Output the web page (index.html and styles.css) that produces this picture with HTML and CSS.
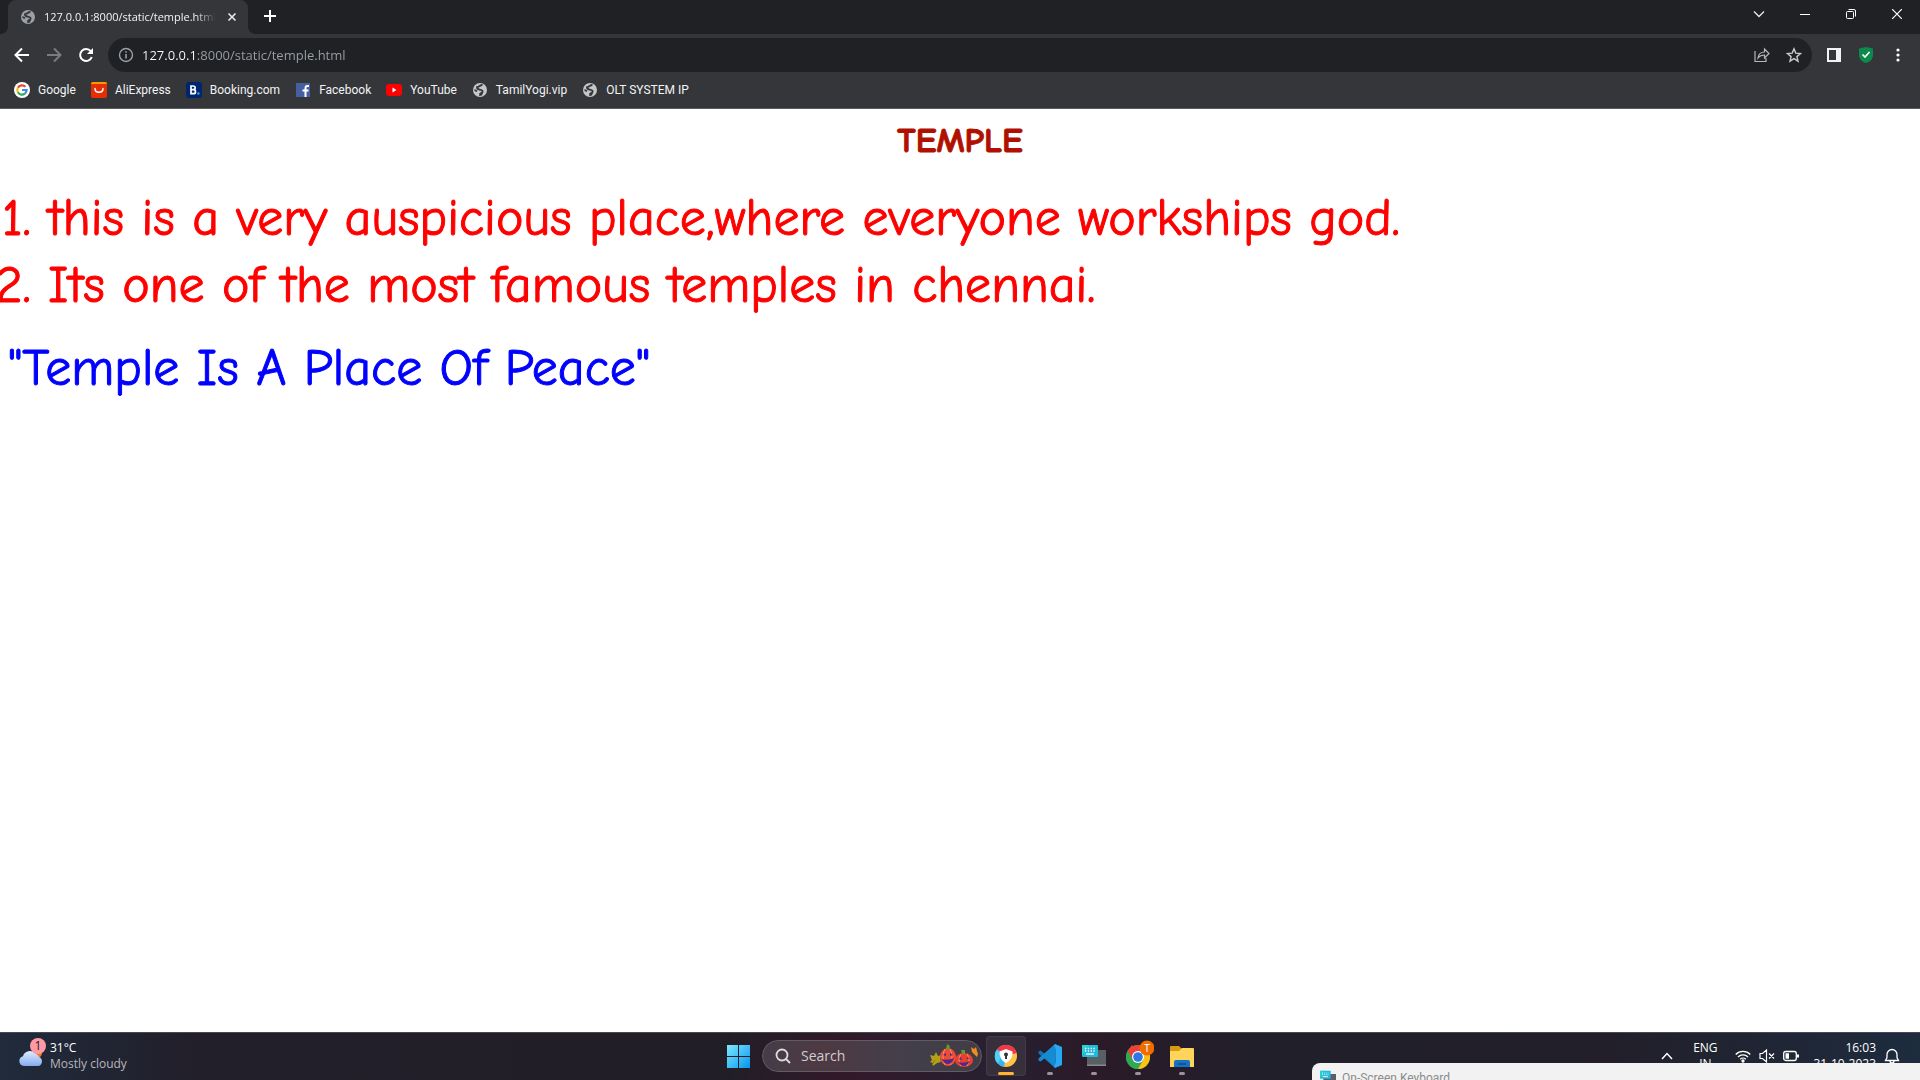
FILE: index.html
```html
<!DOCTYPE html>
<html lang="en">
<head>
<meta charset="utf-8">
<title>127.0.0.1:8000/static/temple.html</title>
<link rel="stylesheet" href="styles.css">
</head>
<body>
<svg class="defs" width="0" height="0" aria-hidden="true">
  <symbol id="globe" viewBox="0 0 16 16">
    <circle cx="8" cy="8" r="7" fill="currentColor"/>
    <path d="M10.500 3C8 2.800 7.500 5 5 5.200 4.500 8 8 7.200 10 8.500c1.800 1.500-.5 3-2.500 3.700" fill="none" stroke="#35363a" stroke-width="1.800"/>
    <path d="M2.500 7l3 1.500-1 1.500L2.500 9zM8 10.500h3l-1 3-3 .5z" fill="#35363a"/>
  </symbol>
  <symbol id="keyboard" viewBox="0 0 24 24">
    <path d="M5 6h19v16H5z" fill="#596065"/><path d="M5 20.500h19V22H5z" fill="#84898c"/>
    <rect y="1" width="16" height="12" rx="1" fill="#20b9dc"/><path d="M0 2a1 1 0 0 1 1-1h6L0 12z" fill="#29d0d0"/>
    <path d="M3 4.500h10M3 7h10" stroke="#fff" stroke-width="1.300" stroke-dasharray="1.300 1.500"/><path d="M4 10h8" stroke="#fff" stroke-width="1.300"/>
  </symbol>
</svg>

<header class="browser">
  <div class="tabstrip">
    <div class="tab">
      <svg class="tab-icon" width="16" height="16"><use href="#globe"/></svg>
      <span class="tab-title">127.0.0.1:8000/static/temple.html</span>
      <button class="icon-button small" aria-label="Close tab"><svg width="10" height="10" viewBox="0 0 10 10"><path d="M1.500 1.500l7 7m0-7l-7 7" stroke="#e8eaed" stroke-width="1.600"/></svg></button>
    </div>
    <button class="icon-button new-tab" aria-label="New tab"><svg width="12" height="12" viewBox="0 0 12 12"><path d="M6 0v12M0 6h12" stroke="#fff" stroke-width="2"/></svg></button>
    <div class="window-controls">
      <button class="icon-button" aria-label="Search tabs"><svg width="12" height="12" viewBox="0 0 12 12"><path d="M1 3.500l5 5 5-5" fill="none" stroke="#e8eaed" stroke-width="1.300"/></svg></button>
      <button class="icon-button" aria-label="Minimize"><svg width="10" height="10" viewBox="0 0 10 10"><path d="M0 5.500h10" stroke="#fff"/></svg></button>
      <button class="icon-button" aria-label="Restore"><svg width="10" height="10" viewBox="0 0 10 10" fill="none" stroke="#fff"><rect x=".5" y="2.500" width="7" height="7" rx="1"/><path d="M2.500 .5H8a1.500 1.500 0 0 1 1.500 1.500v5.500"/></svg></button>
      <button class="icon-button" aria-label="Close"><svg width="10" height="10" viewBox="0 0 10 10"><path d="M0 0l10 10M10 0L0 10" stroke="#fff" stroke-width="1.200"/></svg></button>
    </div>
  </div>

  <div class="toolbar">
    <button class="icon-button" aria-label="Back"><svg width="16" height="16" viewBox="0 0 16 16"><path d="M15 8H2M8 1.500L1.500 8 8 14.500" fill="none" stroke="#fff" stroke-width="2"/></svg></button>
    <button class="icon-button" aria-label="Forward"><svg width="16" height="16" viewBox="0 0 16 16"><path d="M1 8h13M8 1.500L14.500 8 8 14.500" fill="none" stroke="#7b7c7f" stroke-width="2"/></svg></button>
    <button class="icon-button" aria-label="Reload"><svg width="16" height="16" viewBox="0 0 16 16"><path d="M12.800 4.200A6 6 0 1 0 13.800 10" fill="none" stroke="#fff" stroke-width="2"/><path d="M15 1v6H9z" fill="#fff"/></svg></button>
    <div class="omnibox">
      <svg width="16" height="16" viewBox="0 0 16 16"><circle cx="8" cy="8" r="6.500" fill="none" stroke="#9aa0a6" stroke-width="1.400"/><path d="M8 7v4.500M8 4.200v1.600" stroke="#9aa0a6" stroke-width="1.600"/></svg>
      <input class="url" type="text" aria-label="Address" value="127.0.0.1:8000/static/temple.html">
      <button class="icon-button" aria-label="Share"><svg width="16" height="16" viewBox="0 0 16 16" fill="none" stroke="#b4b7bb" stroke-width="1.200"><path d="M1 4v10.500h11V11"/><path d="M4 11c.5-4 3-6 6.500-6V2L15 6.500 10.500 11V8C7.500 8 5.500 9 4 11z"/></svg></button>
      <button class="icon-button" aria-label="Bookmark this page"><svg width="16" height="16" viewBox="0 0 16 16"><path d="M8 1.800l1.800 4.300 4.700.4-3.600 3.100 1.100 4.600L8 11.700l-4 2.500 1.100-4.600L1.500 6.500l4.700-.4z" fill="none" stroke="#c8cace" stroke-width="1.400"/></svg></button>
    </div>
    <button class="icon-button" aria-label="Side panel"><svg width="14" height="14" viewBox="0 0 14 14"><path d="M0 0h14v14H0z" fill="#f1f3f4"/><path d="M2 2h7v10H2z" fill="#35363a"/></svg></button>
    <button class="icon-button" aria-label="Protection"><svg width="16" height="16" viewBox="0 0 16 16"><path d="M1 1.500L8 0l7 1.500V8c0 4-3 7-7 8-4-1-7-4-7-8z" fill="#0b8a4b"/><path d="M4.500 7.500L7 10l4.500-5" fill="none" stroke="#fff" stroke-width="1.700"/></svg></button>
    <button class="icon-button" aria-label="Menu"><svg width="16" height="16" viewBox="0 0 16 16" fill="#fff"><circle cx="8" cy="3" r="1.600"/><circle cx="8" cy="8" r="1.600"/><circle cx="8" cy="13" r="1.600"/></svg></button>
  </div>

  <nav class="bookmarks" aria-label="Bookmarks">
    <a href="#google"><svg width="16" height="16" viewBox="0 0 16 16"><circle cx="8" cy="8" r="8" fill="#fff"/><g fill="none" stroke-width="2.200"><path d="M11.400 4.800A4.700 4.700 0 0 0 3.900 5.700" stroke="#ea4335"/><path d="M3.900 5.700a4.700 4.700 0 0 0 0 4.600" stroke="#fbbc05"/><path d="M3.900 10.300a4.700 4.700 0 0 0 7 1.300" stroke="#34a853"/><path d="M10.900 11.600A4.700 4.700 0 0 0 12.600 8H8" stroke="#4285f4"/></g></svg>Google</a>
    <a href="#aliexpress"><svg width="16" height="16" viewBox="0 0 16 16"><rect width="16" height="16" rx="2" fill="#e62e04"/><path d="M2 0h12a2 2 0 0 1 2 2H0a2 2 0 0 1 2-2z" fill="#ff9900"/><path d="M4 6.500c0 5 8 5 8 0" fill="none" stroke="#fff" stroke-width="1.500" stroke-linecap="round"/></svg>AliExpress</a>
    <a href="#booking"><svg width="16" height="16" viewBox="0 0 16 16"><rect width="16" height="16" rx="3" fill="#00246f"/><path d="M5 4h2.300a1.700 1.700 0 0 1 0 3.700H5h2.500a2 2 0 0 1 0 4H5z" fill="none" stroke="#fff" stroke-width="1.700"/><circle cx="12.400" cy="11.500" r="1.200" fill="#27aef5"/></svg>Booking.com</a>
    <a href="#facebook"><svg width="16" height="16" viewBox="0 0 16 16"><path d="M1 1h14v14H1z" fill="#4460a0"/><path d="M14 4h-1.500Q10.500 4 10.500 6v9M7.500 8.500h6" fill="none" stroke="#fff" stroke-width="2"/></svg>Facebook</a>
    <a href="#youtube"><svg width="16" height="16" viewBox="0 0 16 16"><rect y="2" width="16" height="12" rx="3" fill="#f00"/><path d="M6.500 5.500v5l4-2.500z" fill="#fff"/></svg>YouTube</a>
    <a href="#tamilyogi"><svg class="grey" width="16" height="16"><use href="#globe"/></svg>TamilYogi.vip</a>
    <a href="#olt"><svg class="grey" width="16" height="16"><use href="#globe"/></svg>OLT SYSTEM IP</a>
  </nav>
</header>

<main class="page">
  <h1>TEMPLE</h1>
  <ol>
    <li>this is a very auspicious place,where everyone workships god.</li>
    <li>Its one of the most famous temples in chennai.</li>
  </ol>
  <p>"Temple Is A Place Of Peace"</p>
</main>

<footer class="taskbar">
  <button class="weather">
    <svg width="28" height="30" viewBox="0 0 28 30"><defs><linearGradient id="cloud" x2="0" y2="1"><stop stop-color="#e0ecff"/><stop offset="1" stop-color="#84abef"/></linearGradient></defs><circle cx="19" cy="15" r="5" fill="#f47a20"/><path d="M6 28a5 5 0 0 1-1-9.800A7 7 0 0 1 17 15.500a6 6 0 0 1 4 3.500A4.700 4.700 0 0 1 20 28z" fill="url(#cloud)"/><circle cx="20" cy="8" r="8" fill="#ff99a4"/><text x="20" y="12" text-anchor="middle" font-size="12" fill="#222">1</text></svg>
    <span class="weather-text"><span>31°C</span><span class="dim">Mostly cloudy</span></span>
  </button>

  <div class="apps">
    <button class="app" aria-label="Start"><svg width="24" height="24" viewBox="0 0 24 24"><defs><linearGradient id="win" x2="1" y2="1"><stop stop-color="#7deaff"/><stop offset="1" stop-color="#0794ee"/></linearGradient></defs><path d="M1 1h11v11H1zM13 1h11v11H13zM1 13h11v11H1zM13 13h11v11H13z" fill="url(#win)"/></svg></button>
    <label class="search">
      <svg width="16" height="16" viewBox="0 0 16 16" fill="none" stroke="#ddd" stroke-width="1.800"><circle cx="7" cy="7" r="5.500"/><path d="M11 11l4 4"/></svg>
      <input type="text" placeholder="Search" aria-label="Search">
      <svg width="50" height="26" viewBox="0 0 50 26"><path d="M1 12l4 1 2-4 2 4 4-1-2 4 1 3-4 1-4 3 0-3-3-1 2-2z" fill="#b4a018"/><path d="M6 17l-3 5" stroke="#8a7a10"/><path d="M42 4l3 2 2-2 1 4 1 3-1 3-3-3-2-2z" fill="#f28c1c"/><ellipse cx="19" cy="14" rx="8" ry="9" fill="#ec4b34"/><path d="M16 6q-4 8 0 16M21 6q4 8 0 16" stroke="#ff8763" fill="none"/><ellipse cx="35" cy="17" rx="9" ry="7" fill="#e8402e"/><path d="M32 11q-4 6 0 12M38 11q4 6 0 12" stroke="#ff8763" fill="none"/><path d="M17 6l1-5 3 2-1 4zM33 11l-1-4 4 0v4z" fill="#5f9a34"/><path d="M14 12l3-2v3zM21 13v-3l3 2zM13 16q6 2 12-1-2 6-6 6t-6-5zM30 16l2-2 1 3zM37 16l2-2 1 2zM29 19q6 2 12-1-3 5-6 5t-6-4z" fill="#56278a"/></svg>
    </label>
    <button class="app active" aria-label="Secure browser"><svg width="24" height="24" viewBox="0 0 24 24"><circle cx="12" cy="12" r="11" fill="#ffc247"/><path d="M12 12L3 5.500A11 11 0 0 1 22.600 9z" fill="#f0384b"/><path d="M12 12L3 5.500A11 11 0 0 0 10 22.800z" fill="#31b7f2"/><path d="M3 5.500A11 11 0 0 0 4 20L7 12z" fill="#4dd0fa"/><path d="M5.500 7.500L12 5l6.500 2.500C19 13 16 17 12 19 8 17 5 13 5.500 7.500z" fill="#fff"/><circle cx="12" cy="10.500" r="2" fill="#32343c"/><path d="M11 11h2v4h-2z" fill="#32343c"/></svg></button>
    <button class="app" aria-label="Visual Studio Code"><svg width="24" height="24" viewBox="0 0 24 24"><path d="M17.500 0L7 10 2.500 6.600.5 7.500v2L17 24l1-6z" fill="#0876b9"/><path d="M17.500 24L7 14l-4.500 3.400-2-.9v-2L17 0l1 6z" fill="#168bd2"/><path d="M17 0l7 3v18l-7 3-1-1.500 2-4.500V6l-2-4.500z" fill="#2aa7f1"/></svg></button>
    <button class="app" aria-label="On-Screen Keyboard"><svg width="24" height="24"><use href="#keyboard"/></svg></button>
    <button class="app" aria-label="Chrome"><svg width="32" height="32" viewBox="0 0 32 32"><circle cx="16" cy="17" r="12" fill="#33a852"/><path d="M16 17L5.600 11a12 12 0 0 1 20.800 0z" fill="#ea4335"/><path d="M16 11h10.400A12 12 0 0 1 16 29l5.200-9z" fill="#fbc116"/><path d="M5.600 11l5.200 9 5.200-9 -6-6z" fill="#ea4335"/><path d="M5.600 11L11 20l5 3v6A12 12 0 0 1 5.600 11z" fill="#33a852"/><circle cx="16" cy="17" r="6" fill="#fff"/><circle cx="16" cy="17" r="4.800" fill="#3076e8"/><circle cx="25" cy="8" r="7.500" fill="#ef6c00"/><text x="25" y="12" text-anchor="middle" font-size="11" fill="#fff">T</text></svg></button>
    <button class="app" aria-label="File Explorer"><svg width="24" height="24" viewBox="0 0 24 24"><path d="M0 3a1 1 0 0 1 1-1h8l3 3-3 3H0z" fill="#d69a13"/><path d="M0 7h9l3-3h11a1 1 0 0 1 1 1v18H0z" fill="#ffd45a"/><path d="M4 23v-5a2 2 0 0 1 2-2h12a2 2 0 0 1 2 2v5z" fill="#1672c4"/><path d="M8 20h8" stroke="#0e559c" stroke-width="2"/></svg></button>
  </div>

  <div class="tray">
    <button class="icon-button" aria-label="Hidden icons"><svg width="12" height="12" viewBox="0 0 12 12"><path d="M1 9l5-5.500L11 9" fill="none" stroke="#fff" stroke-width="1.500"/></svg></button>
    <button class="lang"><span>ENG</span><span>IN</span></button>
    <button class="status" aria-label="Network, sound, battery">
      <svg width="16" height="16" viewBox="0 0 16 16" fill="none" stroke="#fff" stroke-width="1.300"><path d="M.7 6.500a10.300 10.300 0 0 1 14.600 0M3 9a7 7 0 0 1 10 0M5.200 11.300a4 4 0 0 1 5.600 0"/><circle cx="8" cy="13" r="1" fill="#fff"/></svg>
      <svg width="16" height="16" viewBox="0 0 16 16" fill="none" stroke="#fff" stroke-width="1.200"><path d="M1 5.500h2.500L7.500 2v12l-4-3.500H1zM10 5.500l5 5m0-5l-5 5"/></svg>
      <svg width="16" height="16" viewBox="0 0 16 16"><rect x=".7" y="3.500" width="12.600" height="9" rx="2" fill="none" stroke="#fff" stroke-width="1.300"/><path d="M2.500 5.300h3.500v5.400H2.500zM14 6.500h2v3h-2z" fill="#fff"/></svg>
    </button>
    <button class="clock"><span>16:03</span><span>31-10-2023</span></button>
    <button class="icon-button" aria-label="Notifications"><svg width="16" height="16" viewBox="0 0 16 16" fill="none" stroke="#fff" stroke-width="1.300"><path d="M1.500 12.500h13L13 9.500V6.500a5 5 0 0 0-10 0v3z"/><path d="M6 13a2 2 0 0 0 4 0"/></svg></button>
  </div>
</footer>

<section class="keyboard-window" aria-label="On-Screen Keyboard">
  <svg width="16" height="16"><use href="#keyboard"/></svg>
  <span>On-Screen Keyboard</span>
</section>
</body>
</html>
```
FILE: styles.css
```css
* { box-sizing: border-box; }

body {
  display: flex;
  flex-direction: column;
  height: 100vh;
  margin: 0;
  overflow: hidden;
  position: relative;
  background: #fff;
  font: 12px/16px "Open Sans", "Noto Sans", sans-serif;
}

.defs { position: absolute; }
svg { display: block; flex: none; }

button, input {
  border: 0;
  padding: 0;
  background: none;
  color: inherit;
  font: inherit;
  outline: 0;
}

.icon-button {
  display: grid;
  place-items: center;
  flex: none;
  width: 32px;
  height: 32px;
}
.icon-button.small { width: 16px; height: 16px; }

/* Browser frame */
.browser {
  flex: none;
  background: #35363a;
  color: #f1f3f4;
  border-bottom: 1px solid #5a5b5f;
}

.tabstrip {
  display: flex;
  height: 34px;
  padding-left: 8px;
  background: #202124;
}

.tab {
  position: relative;
  display: flex;
  align-items: center;
  gap: 8px;
  width: 240px;
  padding: 0 8px 0 12px;
  border-radius: 8px 8px 0 0;
  background: #35363a;
}
.tab::before, .tab::after {
  content: "";
  position: absolute;
  bottom: 0;
  width: 8px;
  height: 8px;
}
.tab::before { left: -8px; background: radial-gradient(circle at 0 0, #202124 8px, #35363a 8px); }
.tab::after { right: -8px; background: radial-gradient(circle at 100% 0, #202124 8px, #35363a 8px); }
.tab-icon { color: #9aa0a6; }
.bookmarks, .keyboard-window { font-family: Roboto, "Open Sans", sans-serif; }
.tab-title {
  flex: 1;
  overflow: hidden;
  font-size: 11px;
  white-space: nowrap;
  -webkit-mask-image: linear-gradient(90deg, #000 88%, transparent);
  mask-image: linear-gradient(90deg, #000 88%, transparent);
}
.new-tab { width: 28px; margin-left: 8px; }

.window-controls { display: flex; margin-left: auto; }
.window-controls .icon-button { width: 46px; height: 28px; }

.toolbar {
  display: flex;
  align-items: center;
  height: 42px;
  padding: 0 6px;
}
.omnibox {
  display: flex;
  align-items: center;
  flex: 1;
  height: 34px;
  margin: 0 6px;
  padding: 0 2px 0 10px;
  border-radius: 17px;
  background: #202124;
}
.url {
  flex: 1;
  margin-left: 8px;
  font-size: 13px;
  color: transparent;
  background: linear-gradient(90deg, #fff 54px, #9aa0a6 54px);
  -webkit-background-clip: text;
  background-clip: text;
}

.bookmarks {
  display: flex;
  gap: 15px;
  height: 32px;
  padding: 6px 14px 0;
}
.bookmarks a {
  display: flex;
  gap: 8px;
  height: 16px;
  color: inherit;
  text-decoration: none;
  white-space: nowrap;
}
.grey { color: #c4c7ca; }

/* Web page */
.page {
  flex: 1;
  min-height: 0;
  padding: 8px;
  overflow: hidden;
  font-family: "Comic Sans MS", "Comic Neue", "Open Sans", sans-serif;
  font-size: 52px;
  line-height: 67px;
  -webkit-text-stroke: 1px;
}
.page h1 {
  margin: 0;
  color: #b01000;
  font-size: 35px;
  line-height: 48px;
  text-align: center;
}
.page ol { margin: 20px 0 16px; padding-left: 40px; color: #f00; }
.page p { margin: 0; color: #00f; }

/* Taskbar */
.taskbar {
  display: grid;
  grid-template-columns: 1fr auto 1fr;
  flex: none;
  height: 48px;
  box-shadow: inset 0 1px #49474f;
  background: linear-gradient(90deg, #202b3c 0, #221f2a 10%, #221e28 38%, #32192a 44%, #272030 52%, #2b1a28 57%, #211f2a 65%, #221f2a 84%, #1d2c3e 100%);
  color: #fff;
}
.weather {
  display: flex;
  justify-self: start;
  gap: 4px;
  padding: 6px 0 0 18px;
  text-align: left;
}
.weather-text { display: grid; align-content: start; padding-top: 2px; }
.dim { color: #b8b6bc; }

.apps { display: flex; gap: 4px; align-items: center; }
.app {
  position: relative;
  display: grid;
  place-items: center;
  width: 40px;
  height: 40px;
  border-radius: 4px;
}
.app::after {
  content: "";
  position: absolute;
  bottom: 1px;
  width: 6px;
  height: 3px;
  border-radius: 2px;
  background: #99949c;
}
.app:first-child::after { display: none; }
.app.active { background: #37303c; box-shadow: inset 0 0 0 1px #423b47; }
.app.active::after { width: 16px; background: #ffb52e; }

.search {
  display: flex;
  align-items: center;
  gap: 10px;
  width: 220px;
  height: 32px;
  padding: 0 2px 0 12px;
  border: 1px solid #625a65;
  border-radius: 16px;
  background: linear-gradient(90deg, #463c47, #4d3942 30%, #443f4a 60%, #3f3d47);
  font-size: 14px;
}
.search input { flex: 1; min-width: 0; }
.search input::placeholder { color: #d0ccd2; opacity: 1; }

.tray {
  display: flex;
  justify-content: flex-end;
  align-items: center;
  padding-right: 12px;
}
.lang, .clock { display: grid; }
.lang { width: 44px; text-align: center; }
.status { display: flex; gap: 8px; padding: 0 14px 0 8px; }
.clock { text-align: right; }

/* Window that rises over the taskbar */
.keyboard-window {
  position: absolute;
  left: 1312px;
  right: 0;
  bottom: 0;
  display: flex;
  gap: 6px;
  height: 17px;
  padding: 7px 8px 0;
  overflow: hidden;
  border-top-left-radius: 8px;
  background: #f2f2f2;
  color: #8c8c8c;
}
```
